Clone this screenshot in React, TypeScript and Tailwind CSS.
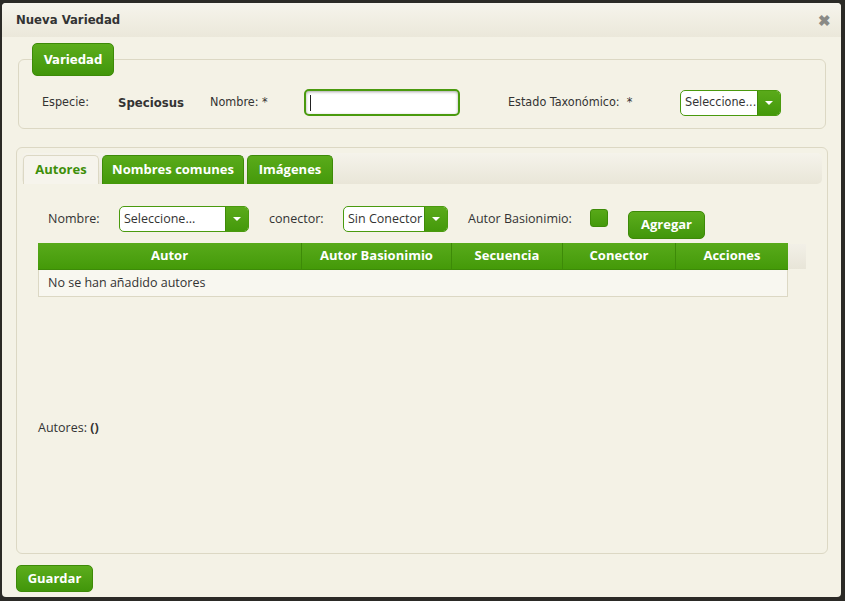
import React from 'react';

const condensed: React.CSSProperties = { fontFamily: '"DejaVu Sans", sans-serif', fontStretch: 'condensed' };

// combo verde estilo kendo
const Combo: React.FC<{ text: string; width: string }> = ({ text, width }) => (
  <div className={`flex h-[26px] ${width} rounded-[5px] border border-[#4a9a0e] overflow-hidden bg-white`}>
    <div className="flex-1 flex items-center pl-[4px] text-[12.5px] text-[#333] whitespace-nowrap overflow-hidden">{text}</div>
    <div className="w-[23px] flex items-center justify-center bg-gradient-to-b from-[#5aaa1a] to-[#44990a] border-l border-[#3f8a08]">
      <div className="w-0 h-0 border-l-[4px] border-r-[4px] border-t-[4px] border-l-transparent border-r-transparent border-t-white" />
    </div>
  </div>
);

const GreenButton: React.FC<{ label: string; className?: string; style?: React.CSSProperties }> = ({ label, className = '', style }) => (
  <div
    className={`flex items-center justify-center rounded-[5px] border border-[#3d8a08] bg-gradient-to-b from-[#5cad1c] to-[#41960a] text-white font-bold text-[13px] ${className}`}
    style={style}
  >
    {label}
  </div>
);

export default function App() {
  const columns = [
    { label: 'Autor', w: 'w-[263px]' },
    { label: 'Autor Basionimio', w: 'w-[150px]' },
    { label: 'Secuencia', w: 'w-[111px]' },
    { label: 'Conector', w: 'w-[113px]' },
    { label: 'Acciones', w: 'w-[113px]' },
  ];

  return (
    <div className="w-[845px] h-[601px] bg-[#2b2a26] pt-[3px] pl-[2px] pr-[4px] pb-[4px]" style={{ fontFamily: '"Open Sans", sans-serif' }}>
      <div className="h-full rounded-[4px] bg-[#f4f2e6] flex flex-col">
        {/* titulo */}
        <div className="h-[34px] shrink-0 flex items-center justify-between pl-[14px] pr-[10px] rounded-t-[4px] bg-gradient-to-b from-[#f6f4ec] to-[#ebe8da]">
          <span className="text-[13px] font-bold text-[#333]" style={condensed}>Nueva Variedad</span>
          <span className="text-[15px] font-bold text-[#8a8a86] leading-none">✖</span>
        </div>

        {/* fieldset Variedad */}
        <div className="ml-[16px] mt-[6px] w-[808px] flex flex-col">
          <GreenButton label="Variedad" className="ml-[14px] w-[82px] h-[33px] -mb-[17px] relative z-10 text-[13px]" style={condensed} />
          <div className="h-[70px] rounded-[6px] border border-[#dcd8c4] pt-[29px] pl-[23px] flex items-start">
            <div className="flex items-center h-[27px] text-[12.5px] text-[#333]" style={condensed}>
              <span className="w-[76px]">Especie:</span>
              <span className="w-[92px] font-bold text-[13px]">Speciosus</span>
              <span className="w-[94px]">Nombre: *</span>
              <div className="w-[156px] h-[27px] rounded-[5px] border-2 border-[#4a9a0e] bg-white shadow-[inset_0_1px_3px_rgba(0,0,0,0.35)] flex items-center pl-[4px]">
                <div className="w-px h-[16px] bg-[#222]" />
              </div>
              <span className="ml-[48px] w-[172px]">Estado Taxonómico:&nbsp; *</span>
              <Combo text="Seleccione..." width="w-[101px]" />
            </div>
          </div>
        </div>

        {/* panel de pestañas */}
        <div className="ml-[14px] mt-[18px] w-[812px] h-[407px] rounded-[6px] border border-[#dcd8c4] flex flex-col">
          <div className="mx-[5px] mt-[5px] h-[31px] rounded-[5px] bg-gradient-to-b from-[#f5f3eb] to-[#e9e6d8] flex items-end pl-[1px] gap-[3px]">
            <div className="h-[29px] w-[76px] rounded-t-[5px] border border-b-0 border-[#dcd8c4] bg-[#f6f4ec] flex items-center justify-center text-[13px] font-bold text-[#3e8f0a]">Autores</div>
            <div className="h-[29px] w-[142px] rounded-t-[5px] border border-b-0 border-[#3d8a08] bg-gradient-to-b from-[#5aab1a] to-[#44990a] flex items-center justify-center text-[13px] font-bold text-white">Nombres comunes</div>
            <div className="h-[29px] w-[86px] rounded-t-[5px] border border-b-0 border-[#3d8a08] bg-gradient-to-b from-[#5aab1a] to-[#44990a] flex items-center justify-center text-[13px] font-bold text-white">Imágenes</div>
          </div>

          <div className="pl-[21px] flex flex-col">
            <div className="mt-[22px] pl-[10px] flex items-start text-[12.5px] text-[#333]">
              <span className="w-[71px] h-[26px] flex items-center">Nombre:</span>
              <Combo text="Seleccione..." width="w-[130px]" />
              <span className="ml-[20px] w-[74px] h-[26px] flex items-center">conector:</span>
              <Combo text="Sin Conector" width="w-[105px]" />
              <span className="ml-[20px] w-[122px] h-[26px] flex items-center">Autor Basionimio:</span>
              <div className="mt-[3px] w-[18px] h-[18px] rounded-[3px] border border-[#3d8a08] bg-gradient-to-b from-[#58a918] to-[#44990a]" />
              <GreenButton label="Agregar" className="ml-[20px] mt-[5px] w-[77px] h-[28px]" />
            </div>

            <div className="mt-[4px] flex">
              <div className="flex h-[27px] bg-gradient-to-b from-[#58aa1a] to-[#449a08] border-b border-[#3d8a08]">
                {columns.map((c, i) => (
                  <div
                    key={c.label}
                    className={`${c.w} flex items-center justify-center text-[13px] font-bold text-white ${i > 0 ? 'border-l border-[#3d8a08]' : ''}`}
                  >
                    {c.label}
                  </div>
                ))}
              </div>
              <div className="w-[18px] h-[25px] mt-[1px] bg-gradient-to-b from-[#f2f0e7] to-[#e8e5d8]" />
            </div>
            <div className="w-[750px] h-[27px] border border-t-0 border-[#dcd8c4] bg-[#f8f7f0] flex items-center pl-[9px] text-[12.5px] text-[#333]">
              No se han añadido autores
            </div>

            <div className="mt-[122px] text-[12.5px] text-[#333]">
              Autores: <span className="font-bold">()</span>
            </div>
          </div>
        </div>

        <div className="ml-[14px] mt-[11px]">
          <GreenButton label="Guardar" className="w-[77px] h-[27px]" />
        </div>
      </div>
    </div>
  );
}
